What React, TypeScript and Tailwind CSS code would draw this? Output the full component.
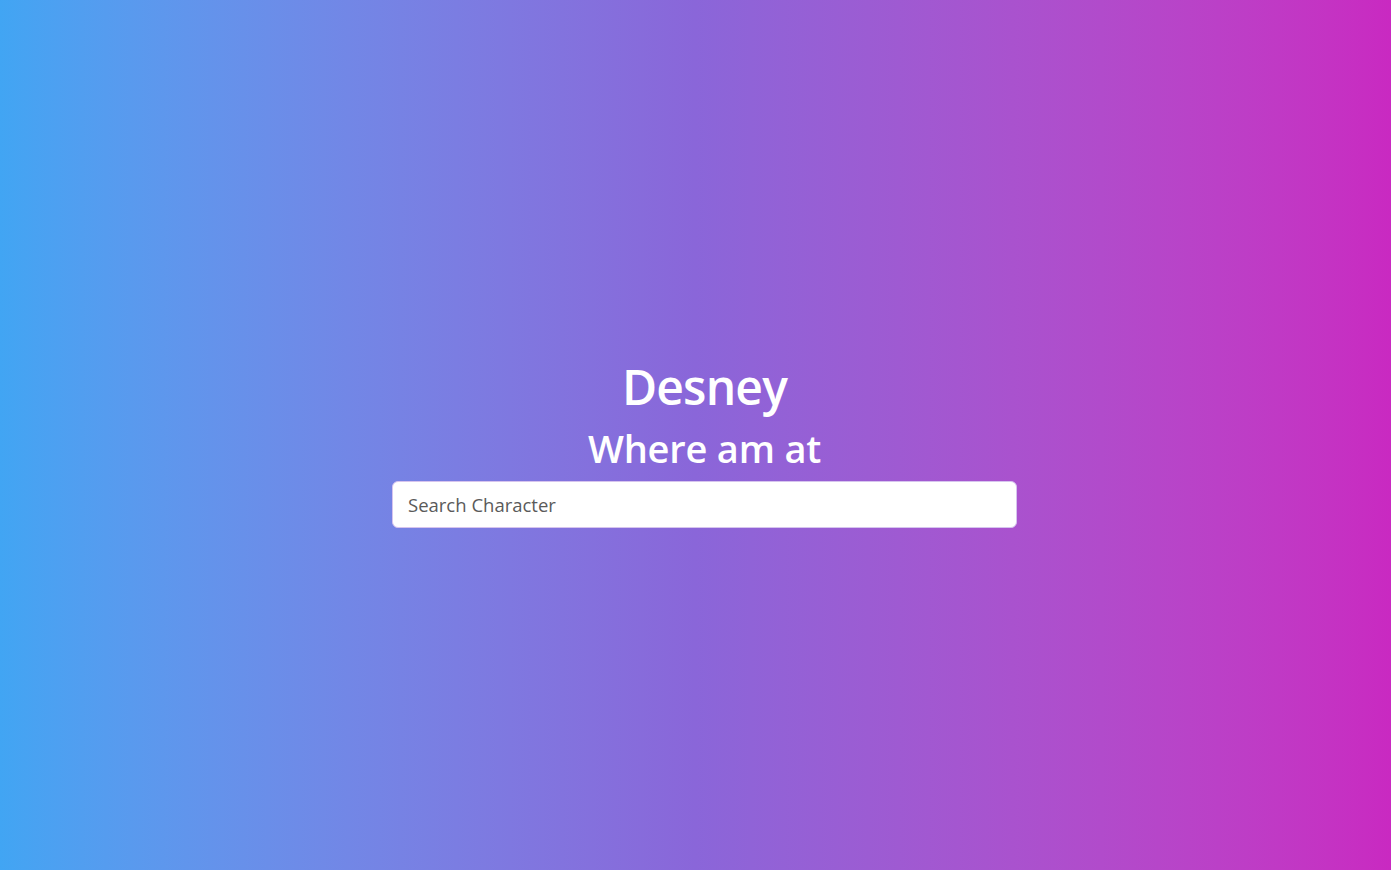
export default function App() {
  return (
    <div className="min-h-screen w-full bg-gradient-to-r from-[#41a5f3] via-[#8a66d9] to-[#c929c1] flex flex-col items-center justify-center font-['Open_Sans',sans-serif] text-white pl-[18px]">
      <div className="flex flex-col items-center pt-[16px]">
        <h1 className="text-[48px] leading-[56px] font-semibold tracking-[-0.8px]">Desney</h1>
        <h2 className="mt-[11px] text-[38px] leading-[44px] font-semibold tracking-[-0.2px]">Where am at</h2>
        <input
          type="text"
          placeholder="Search Character"
          className="mt-[11px] w-[625px] h-[47px] rounded-[6px] border border-[#d6c4ee] bg-white px-[15px] text-[18.5px] text-[#495057] placeholder:text-[#5a5a5a] outline-none"
        />
      </div>
    </div>
  );
}
